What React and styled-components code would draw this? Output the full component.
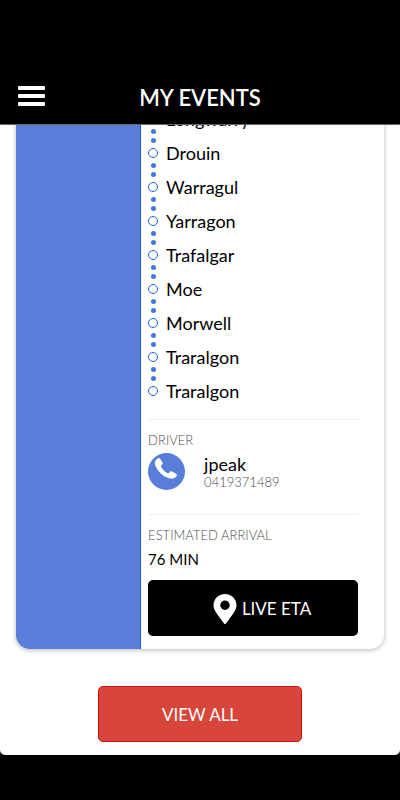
import React from "react";
import styled, { createGlobalStyle, ThemeProvider } from "styled-components";

const theme = {
  colors: {
    black: "#000000",
    white: "#ffffff",
    blue: "#587eda",
    blue_dark: "#1d63dd",
    red: "#d8453b",
    red_dark: "#cc1409",
    grey: "#4c4c4c",
    line: "#efefef",
  },
};

const stops = [
  "Longwarry",
  "Drouin",
  "Warragul",
  "Yarragon",
  "Trafalgar",
  "Moe",
  "Morwell",
  "Traralgon",
  "Traralgon",
];

function StopItem({ name, last }) {
  return (
    <Stop>
      <Track>
        <Dot />
        <Ring />
        <Dot $hidden={last} />
      </Track>
      {name}
    </Stop>
  );
}

function App() {
  return (
    <ThemeProvider theme={theme}>
      <GlobalStyle />
      <Header>
        <MenuButton type="button" aria-label="Menu">
          <span className="line"></span>
          <span className="line"></span>
          <span className="line"></span>
        </MenuButton>
        <Title>MY EVENTS</Title>
      </Header>
      <Main>
        <Card>
          <Side />
          <Details>
            <StopList>
              {stops.map((name, i) => (
                <StopItem key={i} name={name} last={i === stops.length - 1} />
              ))}
            </StopList>
            <Driver>
              <Label>DRIVER</Label>
              <Contact>
                <CallLink href="tel:0419371489" aria-label="Call jpeak">
                  <svg width="25" height="29" viewBox="0 0 25 29">
                    <path
                      fill="currentColor"
                      d="M3 1.900C4.300.8 5.600.8 6.500 2.200l1.900 3.100c.6 1.200.3 2-.8 2.700-.8.500-.9 1-.5 1.800 1.500 2.900 3.700 5.100 6.500 6.400.8.400 1.300.200 1.700-.6.600-1.200 1.500-1.600 2.800-1l3.600 1.900c1.400.7 1.600 1.900.6 3-1.800 2.100-4.600 2.700-8.100 1.500C8.200 18.900 3.500 14.100 1.300 8.500.3 5.900.9 3.500 3 1.900z"
                    />
                  </svg>
                </CallLink>
                <div>
                  <Name>jpeak</Name>
                  <Phone>0419371489</Phone>
                </div>
              </Contact>
            </Driver>
            <Arrival>
              <Label>ESTIMATED ARRIVAL</Label>
              <Time>76 MIN</Time>
            </Arrival>
            <EtaButton type="button">
              <svg width="24" height="32" viewBox="0 -2 24 32">
                <path
                  fill="currentColor"
                  fillRule="evenodd"
                  d="M12 0C5.400 0 .5 5 .5 11.300c0 3.300 1.300 5.500 3.400 8.500L11 29.500c.5.700 1.500.700 2 0l7.100-9.700c2.100-3 3.400-5.200 3.400-8.500C23.500 5 18.600 0 12 0zm0 6.600a4.700 4.700 0 1 1 0 9.400 4.700 4.700 0 0 1 0-9.400z"
                />
              </svg>
              LIVE ETA
            </EtaButton>
          </Details>
        </Card>
        <ViewAllButton type="button">VIEW ALL</ViewAllButton>
      </Main>
    </ThemeProvider>
  );
}

const GlobalStyle = createGlobalStyle`
  * {
    box-sizing: border-box;
  }

  body {
    margin: 0;
    background: #000000;
    color: #000000;
    font-family: Lato, "Open Sans", sans-serif;
    font-size: 18px;
  }

  button {
    font-family: inherit;
    cursor: pointer;
  }
`;

const Header = styled.header`
  position: sticky;
  top: 0;
  z-index: 10;
  display: grid;
  grid-template-columns: 28px 1fr 28px;
  align-items: center;
  padding: 86px 17px 14px;
  background: ${(props) => props.theme.colors.black};
  border-bottom: 1px solid #666666;
`;

const MenuButton = styled.button`
  display: flex;
  flex-direction: column;
  gap: 4px;
  width: 28px;
  padding: 0 0 4px 1px;
  border: 0;
  background: none;

  .line {
    width: 100%;
    height: 4px;
    border-radius: 1px;
    background: ${(props) => props.theme.colors.white};
  }
`;

const Title = styled.h1`
  margin: 0;
  color: ${(props) => props.theme.colors.white};
  font-size: 22px;
  font-weight: 600;
  line-height: 22px;
  text-align: center;
`;

/* the list is scrolled, its first stop sits half under the header */
const Main = styled.main`
  display: flex;
  flex-direction: column;
  align-items: center;
  margin-top: -23px;
  padding: 0 16px 13px;
  border-radius: 0 0 5px 5px;
  background: ${(props) => props.theme.colors.white};
`;

const Card = styled.section`
  display: flex;
  width: 100%;
  overflow: hidden;
  border-radius: 0 0 14px 14px;
  box-shadow: 0 1px 5px rgba(0, 0, 0, 0.3);
`;

const Side = styled.div`
  width: 34%;
  background: ${(props) => props.theme.colors.blue};
  border-right: 1px solid ${(props) => props.theme.colors.blue_dark};
`;

const Details = styled.div`
  flex: 1;
  padding: 0 26px 13px 7px;
`;

const StopList = styled.ul`
  margin: 0;
  padding: 0 0 11px;
  list-style: none;
`;

const Stop = styled.li`
  display: flex;
  align-items: center;
  gap: 8px;
  height: 34px;
`;

const Track = styled.span`
  display: flex;
  flex-direction: column;
  align-items: center;
  gap: 5px;
`;

const Dot = styled.span`
  width: 5px;
  height: 5px;
  border-radius: 50%;
  background: #4377dc;
  visibility: ${(props) => (props.$hidden ? "hidden" : "visible")};
`;

const Ring = styled.span`
  width: 10px;
  height: 10px;
  border: 1px solid ${(props) => props.theme.colors.blue_dark};
  border-radius: 50%;
`;

const Driver = styled.div`
  padding: 11px 0 24px;
  border-top: 1px solid ${(props) => props.theme.colors.line};
`;

const Label = styled.div`
  color: ${(props) => props.theme.colors.grey};
  font-size: 13px;
  font-weight: 300;
  line-height: 18px;
`;

const Contact = styled.div`
  display: flex;
  align-items: center;
  gap: 19px;
  padding-top: 4px;
`;

const CallLink = styled.a`
  display: flex;
  align-items: center;
  justify-content: center;
  width: 37px;
  height: 37px;
  border-radius: 50%;
  background: ${(props) => props.theme.colors.blue};
  color: ${(props) => props.theme.colors.white};
`;

const Name = styled.div`
  line-height: 20px;
`;

const Phone = styled.div`
  color: ${(props) => props.theme.colors.grey};
  font-size: 13px;
  font-weight: 300;
  line-height: 16px;
`;

const Arrival = styled.div`
  padding: 11px 0 10px;
  border-top: 1px solid ${(props) => props.theme.colors.line};
`;

const Time = styled.div`
  padding-top: 4px;
  font-size: 15px;
  line-height: 22px;
`;

const EtaButton = styled.button`
  display: flex;
  align-items: center;
  justify-content: center;
  gap: 5px;
  width: 100%;
  height: 56px;
  padding: 0 0 0 18px;
  border: 0;
  border-radius: 5px;
  background: ${(props) => props.theme.colors.black};
  color: ${(props) => props.theme.colors.white};
  font-size: 17px;
`;

const ViewAllButton = styled.button`
  width: 204px;
  height: 56px;
  margin-top: 37px;
  padding: 0;
  border: 1px solid ${(props) => props.theme.colors.red_dark};
  border-radius: 5px;
  background: ${(props) => props.theme.colors.red};
  color: ${(props) => props.theme.colors.white};
  font-size: 17px;
`;

export default App;
